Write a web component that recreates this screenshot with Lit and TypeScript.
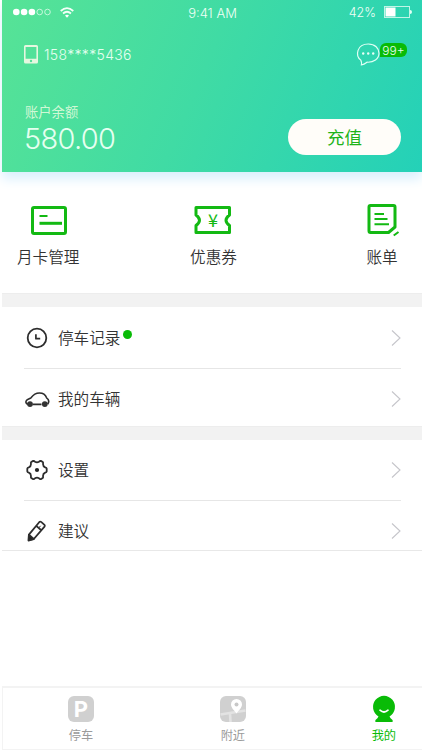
import { LitElement, html, css, svg } from "lit";
import { customElement } from "lit/decorators.js";

const icons = {
  clock: svg`<circle cx="13" cy="12" r="9.3"/><path d="M11.9 8.2V12.7H16.2" stroke-width="1.7"/>`,
  car: svg`<path d="M4.2 17.2C2 16.8 1.4 15.2 2.4 13.6C3.6 12 5.6 11.8 7 10.8C9.5 7.4 12 6 15.4 6C19.4 6 21.6 8 22.6 10.8C24.8 12.4 25.2 15 23.6 17.2M8.5 17.4H17.5" stroke-width="1.6"/><circle cx="6" cy="17.1" r="2.9" fill="#333" stroke="none"/><circle cx="20.8" cy="17.1" r="2.9" fill="#333" stroke="none"/>`,
  gear: svg`<path d="M9.2 2.9Q10.2 2.7 11 3.8Q13 5 15 3.8Q15.8 2.7 16.8 2.9L18.8 4Q19.4 4.8 19 6Q19 8.4 21.2 9.3Q22.6 9.6 22.7 10.6V13.4Q22.6 14.4 21.2 14.7Q19 15.6 19 18Q19.4 19.2 18.8 20L16.8 21.1Q15.8 21.3 15 20.2Q13 19 11 20.2Q10.2 21.3 9.2 21.1L7.2 20Q6.6 19.2 7 18Q7 15.6 4.8 14.7Q3.4 14.4 3.3 13.4V10.6Q3.4 9.6 4.8 9.3Q7 8.4 7 6Q6.6 4.8 7.2 4Z"/><circle cx="13" cy="12" r="2.1" fill="#222" stroke="none"/>`,
  pencil: svg`<path d="M4.9 15.6L15.4 3Q16.2 2.2 17.1 2.9L20.5 5.9Q21.2 6.7 20.5 7.6L9.8 20L4.8 21.2ZM12.3 6.8L17 11"/><path d="M16.6 6.8L14.6 9" stroke-width="1"/><path d="M4.9 15.8L9.8 20L4.5 21.6Z" fill="#222"/>`,
};

@customElement("list-row")
class ListRow extends LitElement {
  static properties = { icon: {}, label: {}, dot: { type: Boolean } };
  declare icon: keyof typeof icons;
  declare label: string;
  declare dot: boolean;
  static styles = css`
    :host { display: flex; align-items: center; margin-left: 22px; padding-right: 21px; color: #333; box-sizing: border-box; }
    .icon { width: 26px; height: 24px; margin-right: 8px; fill: none; stroke: #2d2d2d; stroke-width: 1.8; stroke-linejoin: round; }
    .label { font-size: 15.6px; line-height: 24px; padding-top: 2px; }
    .dot { width: 9px; height: 9px; border-radius: 50%; background: #09bb07; margin: -6px 0 0 3px; }
    .arrow { width: 11px; height: 18px; margin-left: auto; fill: none; stroke: #c5c5ca; stroke-width: 1.1; }
  `;
  render() {
    return html`<svg class="icon" viewBox="0 0 26 24">${icons[this.icon]}</svg>
      <span class="label">${this.label}</span>${this.dot ? html`<i class="dot"></i>` : ""}
      <svg class="arrow" viewBox="0 0 11 18"><path d="M2 1.5L10 9L2 16.5"/></svg>`;
  }
}

@customElement("app-root")
class AppRoot extends LitElement {
  static styles = css`
    :host { display: flex; flex-direction: column; width: 422px; height: 750px; box-sizing: border-box; padding-left: 2px; background: #fff; overflow: hidden; font-family: Inter, "Noto Sans CJK SC", sans-serif; font-weight: 350; }
    svg { display: block; flex: none; overflow: visible; }
    .hero { height: 172px; flex: none; background: linear-gradient(113deg, #57e396 0%, #40dba4 47%, #24d1b8 100%); box-shadow: 0 7px 11px #d9f0fd; color: #e5fff0; font-weight: 300; }
    .status { display: grid; grid-template-columns: 1fr auto 1fr; height: 26px; align-items: center; padding: 0 10px 0 11px; font-size: 13px; box-sizing: border-box; color: #effff6; }
    .signal { display: flex; align-items: center; gap: 9px; margin-top: -2px; }
    .power { display: flex; justify-content: flex-end; align-items: center; gap: 8px; margin-top: -2px; font-size: 12.5px; }
    .account { display: flex; align-items: center; height: 56px; padding: 0 15px 0 22px; box-sizing: border-box; }
    .phone { margin-left: 6px; font-size: 14px; letter-spacing: .32px; }
    .chat { margin-left: auto; }
    .badge { background: #09bb07; border-radius: 6px 6px 6px 0; height: 14px; line-height: 15px; width: 27px; text-align: center; font-size: 12px; margin-top: -9px; }
    .balance { display: flex; justify-content: space-between; padding: 20px 21px 0 23px; }
    .caption { font-size: 13.3px; line-height: 19px; padding-top: 1px; color: #d0f8d5; font-weight: 400; }
    .amount { font-size: 29px; line-height: 34px; letter-spacing: -.7px; margin-left: -1px; }
    .topup { width: 113px; height: 36px; margin-top: 17px; border-radius: 18px; background: #fffdf9; color: #1eb31a; font-size: 17.5px; font-weight: 400; line-height: 38px; text-align: center; }
    .actions { display: grid; grid-template-columns: 1fr auto 1fr; height: 121px; padding: 29px 24px 0 15px; box-sizing: border-box; flex: none; }
    .action { display: flex; flex-direction: column; align-items: center; color: #333; font-size: 15.6px; line-height: 24px; gap: 5px; }
    .action:first-child { justify-self: start; }
    .action:last-child { justify-self: end; }
    .action:nth-child(2) { margin-left: 17px; margin-right: 5px; }
    .action svg { fill: none; stroke: #13b913; stroke-width: 3; stroke-linejoin: round; }
    .action .yen { fill: #13b913; stroke: none; font-family: "Noto Sans CJK SC", sans-serif; font-size: 18px; font-weight: 400; text-anchor: middle; }
    .band { height: 14px; flex: none; background: #f2f2f2; border-top: 1px solid #ededed; box-sizing: border-box; }
    .rule { height: 1px; background: #e6e6e6; margin: 0 21px 0 22px; }
    .end { height: 1px; background: #e8e8e8; }
    .tabs { display: flex; justify-content: space-between; margin-top: auto; height: 64px; box-sizing: border-box; border: solid #f3f3f3; border-width: 2px 0 1px 1px; padding: 8px 26px 0 65px; flex: none; }
    .tab { display: flex; flex-direction: column; align-items: center; gap: 4px; font-size: 12.2px; line-height: 19px; color: #9b9b9b; font-weight: 400; }
    .active { color: #09bb07; }
    .p { width: 26px; height: 26px; border-radius: 6px; background: #d0d0d0; color: #fff; font-size: 22px; line-height: 26px; font-weight: 700; text-align: center; }
    .r1 { height: 61px; } .r2 { height: 57px; padding-top: 2px; } .r3 { height: 60px; } .r4 { height: 49px; padding-top: 11px; }
  `;
  render() {
    return html`
      <header class="hero">
        <div class="status">
          <div class="signal">
            <svg width="38" height="8" viewBox="0 0 38 8">${[0, 1, 2, 3, 4].map(i => svg`<circle cx=${3.3 + i * 7.8} cy="4" r=${i < 3 ? 3.3 : 2.8} fill=${i < 3 ? "#fff" : "none"} stroke=${i < 3 ? "none" : "#dffbea"} stroke-width=".8"/>`)}</svg>
            <svg width="14" height="11" viewBox="0 0 14 11" fill="none" stroke="#f4fff8" stroke-width="1.7"><path d="M.7 4Q7-1.6 13.3 4M3 6.5Q7 3 11 6.5"/><path d="M5 8.6Q7 7 9 8.6L7 10.7Z" fill="#fff" stroke="none"/></svg>
          </div>
          <span>9:41 AM</span>
          <div class="power"><span>42%</span>
            <svg width="28" height="12" viewBox="0 0 28 12"><rect x=".5" y=".5" width="25" height="11" fill="none" stroke="#c0f5e7"/><path d="M1.5 1.5H11.5V10.5H1.5Z" fill="#fff"/><path d="M26 4Q28 4 28 6T26 8Z" fill="#e0fff5"/></svg>
          </div>
        </div>
        <div class="account">
          <svg width="14" height="19" viewBox="0 0 14 19"><path fill-rule="evenodd" fill="#e5f7df" d="M1.5 0H12.5Q14 0 14 1.5V17Q14 18.5 12.5 18.5H1.5Q0 18.5 0 17V1.5Q0 0 1.5 0ZM1.6 2V13.7H12.4V2ZM7 14.8A1.2 1.2 0 1 0 7 17.2A1.2 1.2 0 1 0 7 14.8Z"/></svg>
          <span class="phone">158****5436</span>
          <svg class="chat" width="24" height="23" viewBox="0 0 24 23" fill="none" stroke="#e0fff5" stroke-width="1.2"><path d="M4.8 17.1C-1 12.5 .8 1 12.3 1C19 1 23 5.2 23 10.2C23 16 17.6 19.6 11 19.2C8.7 21 7.4 21.7 5.4 21.9Q6 19.3 4.8 17.1Z"/><g fill="#e9fff7" stroke="none"><circle cx="7.2" cy="10.5" r="1.2"/><circle cx="12.2" cy="10.5" r="1.2"/><circle cx="17.2" cy="10.5" r="1.2"/></g></svg>
          <span class="badge">99+</span>
        </div>
        <div class="balance">
          <div><div class="caption">账户余额</div><div class="amount">580.00</div></div>
          <div class="topup">充值</div>
        </div>
      </header>
      <section class="actions">
        <div class="action"><svg width="38" height="40" viewBox="0 0 38 40"><rect x="3.5" y="6.5" width="33" height="26" rx="1.5"/><path d="M10.5 15H18.5" stroke-width="2"/><path d="M10.5 22.3H33"/></svg><span>月卡管理</span></div>
        <div class="action"><svg width="38" height="40" viewBox="0 0 38 40"><path d="M2 6.5H35.5V14Q28.5 19.2 35.5 24.5V31.5H2V24.5Q9 19.2 2 14Z"/><text class="yen" x="19" y="26">¥</text></svg><span>优惠券</span></div>
        <div class="action"><svg width="32" height="40" viewBox="0 0 32 40"><path d="M4.5 4.5H27.5Q29 4.5 29 6V26L22.5 31.5H4.5Q3 31.5 3 30V6Q3 4.5 4.5 4.5Z"/><path d="M8.5 13H18M8.5 18H21.5M8.5 23.3H23M27.7 34.5L32.5 31" stroke-width="2"/></svg><span>账单</span></div>
      </section>
      <div class="band"></div>
      <list-row class="r1" icon="clock" label="停车记录" dot></list-row>
      <div class="rule"></div>
      <list-row class="r2" icon="car" label="我的车辆"></list-row>
      <div class="band"></div>
      <list-row class="r3" icon="gear" label="设置"></list-row>
      <div class="rule"></div>
      <list-row class="r4" icon="pencil" label="建议"></list-row>
      <div class="end"></div>
      <nav class="tabs">
        <div class="tab"><span class="p">P</span><span>停车</span></div>
        <div class="tab"><svg width="26" height="26" viewBox="0 0 26 26"><rect width="26" height="26" rx="6" fill="#d0d0d0"/><path d="M.5 18.5L13 16.5L25.5 14.5M10 17L10.5 26" stroke="#e3e3e3" stroke-width="2.6"/><path d="M16.5 17.5C13.5 13.5 11 11.5 11 8.5A5.5 5.5 0 0 1 22 8.5C22 11.5 19.5 13.5 16.5 17.5Z" fill="#fff"/><circle cx="16.5" cy="8.5" r="2" fill="#c8c8c8"/></svg><span>附近</span></div>
        <div class="tab active"><svg width="24" height="26" viewBox="0 0 24 26"><path d="M6.5 20.4A11 11 0 1 1 17.5 20.4Q18.2 22.3 20.5 24Q21.5 26 20 26H4Q2.5 26 3.5 24Q5.8 22.3 6.5 20.4Z" fill="#09bb07"/><path d="M8 14.2Q12 17.8 16 14.2" fill="none" stroke="#fff" stroke-width="1.7" stroke-linecap="round"/></svg><span>我的</span></div>
      </nav>`;
  }
}
